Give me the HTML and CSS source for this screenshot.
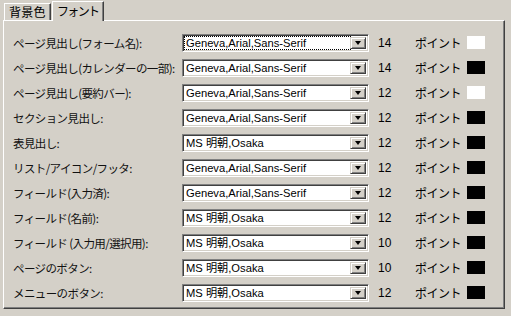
FILE: index.html
```html
<!DOCTYPE html>
<html lang="ja">
<head>
<meta charset="utf-8">
<link rel="stylesheet" href="styles.css">
</head>
<body>
<div class="dialog">
  <div class="tabs">
    <div class="tab">背景色</div>
    <div class="tab active">フォント</div>
  </div>
  <div class="panel">
    <div class="row">
      <div class="label">ページ見出し(フォーム名):</div>
      <div class="select focus"><span class="val"><span class="focusbox">Geneva,Arial,Sans-Serif</span></span><span class="btn"><i></i></span></div>
      <div class="size">14</div><div class="unit">ポイント</div><div class="swatch white"></div>
    </div>
    <div class="row">
      <div class="label">ページ見出し(カレンダーの一部):</div>
      <div class="select"><span class="val">Geneva,Arial,Sans-Serif</span><span class="btn"><i></i></span></div>
      <div class="size">14</div><div class="unit">ポイント</div><div class="swatch black"></div>
    </div>
    <div class="row">
      <div class="label">ページ見出し(要約バー):</div>
      <div class="select"><span class="val">Geneva,Arial,Sans-Serif</span><span class="btn"><i></i></span></div>
      <div class="size">12</div><div class="unit">ポイント</div><div class="swatch white"></div>
    </div>
    <div class="row">
      <div class="label">セクション見出し:</div>
      <div class="select"><span class="val">Geneva,Arial,Sans-Serif</span><span class="btn"><i></i></span></div>
      <div class="size">12</div><div class="unit">ポイント</div><div class="swatch black"></div>
    </div>
    <div class="row">
      <div class="label">表見出し:</div>
      <div class="select"><span class="val">MS 明朝,Osaka</span><span class="btn"><i></i></span></div>
      <div class="size">12</div><div class="unit">ポイント</div><div class="swatch black"></div>
    </div>
    <div class="row">
      <div class="label">リスト/アイコン/フッタ:</div>
      <div class="select"><span class="val">Geneva,Arial,Sans-Serif</span><span class="btn"><i></i></span></div>
      <div class="size">12</div><div class="unit">ポイント</div><div class="swatch black"></div>
    </div>
    <div class="row">
      <div class="label">フィールド(入力済):</div>
      <div class="select"><span class="val">Geneva,Arial,Sans-Serif</span><span class="btn"><i></i></span></div>
      <div class="size">12</div><div class="unit">ポイント</div><div class="swatch black"></div>
    </div>
    <div class="row">
      <div class="label">フィールド(名前):</div>
      <div class="select"><span class="val">MS 明朝,Osaka</span><span class="btn"><i></i></span></div>
      <div class="size">12</div><div class="unit">ポイント</div><div class="swatch black"></div>
    </div>
    <div class="row">
      <div class="label">フィールド (入力用/選択用):</div>
      <div class="select"><span class="val">MS 明朝,Osaka</span><span class="btn"><i></i></span></div>
      <div class="size">10</div><div class="unit">ポイント</div><div class="swatch black"></div>
    </div>
    <div class="row">
      <div class="label">ページのボタン:</div>
      <div class="select"><span class="val">MS 明朝,Osaka</span><span class="btn"><i></i></span></div>
      <div class="size">10</div><div class="unit">ポイント</div><div class="swatch black"></div>
    </div>
    <div class="row">
      <div class="label">メニューのボタン:</div>
      <div class="select"><span class="val">MS 明朝,Osaka</span><span class="btn"><i></i></span></div>
      <div class="size">12</div><div class="unit">ポイント</div><div class="swatch black"></div>
    </div>
  </div>
</div>
</body>
</html>
```
FILE: styles.css
```css
html, body {
  margin: 0;
  padding: 0;
  background: #d4d0c8;
}
body {
  width: 511px;
  height: 316px;
  overflow: hidden;
  font-family: "Noto Sans CJK JP", "Liberation Sans", sans-serif;
  font-size: 12px;
  color: #000;
}
.dialog {
  padding: 2px 6px 0 3px;
}
.tabs {
  display: flex;
  align-items: flex-end;
  height: 18px;
  padding-left: 1px;
  position: relative;
  z-index: 2;
}
.tab {
  height: 16px;
  line-height: 16px;
  padding: 0 4px;
  border-top: 1px solid #fff;
  border-left: 1px solid #fff;
  border-right: 1px solid #404040;
  box-shadow: inset -1px 0 0 #808080;
  font-size: 12px;
  letter-spacing: 0.3px;
}
.tab.active {
  height: 19px;
  margin-bottom: -1px;
  margin-left: 1px;
  background: #d4d0c8;
  padding: 0 4px 0 4px;
  line-height: 17px;
  letter-spacing: -1.6px;
}
.panel {
  border-top: 1px solid #fff;
  border-left: 1px solid #fff;
  border-right: 1px solid #404040;
  border-bottom: 1px solid #404040;
  box-shadow: inset -1px -1px 0 #808080;
  height: 289px;
  padding: 9px 0 0 9px;
  box-sizing: border-box;
}
.row {
  display: flex;
  align-items: center;
  height: 25px;
}
.label {
  width: 169px;
  font-size: 11.5px;
  white-space: nowrap;
  letter-spacing: -0.6px;
  color: #111;
}
.select {
  width: 187px;
  height: 18px;
  box-sizing: border-box;
  display: flex;
  align-items: stretch;
  background: #fff;
  border-top: 1px solid #808080;
  border-left: 1px solid #808080;
  border-right: 1px solid #fff;
  border-bottom: 1px solid #fff;
  box-shadow: inset 1px 1px 0 #404040, inset -1px -1px 0 #d4d0c8;
  padding: 2px;
}
.val {
  flex: 1;
  font-family: "Liberation Sans", "Noto Sans CJK JP", sans-serif;
  font-size: 11.2px;
  line-height: 12px;
  padding-left: 1px;
  display: flex;
  align-items: center;
  white-space: nowrap;
}
.focusbox {
  outline: 1px dotted #000;
  outline-offset: 0;
  flex: 1;
  height: 12px;
  margin-left: -1px;
  padding-left: 1px;
}
.btn {
  width: 16px;
  background: #d4d0c8;
  box-sizing: border-box;
  border-top: 1px solid #d4d0c8;
  border-left: 1px solid #d4d0c8;
  border-right: 1px solid #404040;
  border-bottom: 1px solid #404040;
  box-shadow: inset 1px 1px 0 #fff, inset -1px -1px 0 #808080;
  display: flex;
  align-items: center;
  justify-content: center;
}
.btn i {
  width: 0;
  height: 0;
  border-left: 3.5px solid transparent;
  border-right: 3.5px solid transparent;
  border-top: 4px solid #000;
  margin-top: 1px;
}
.size {
  width: 46px;
  padding-left: 9px;
  box-sizing: border-box;
  font-family: "Liberation Sans", sans-serif;
  font-size: 12px;
}
.unit {
  width: 52px;
  font-size: 12px;
  letter-spacing: -0.5px;
}
.swatch {
  width: 18px;
  height: 13px;
}
.swatch.white { background: #fff; }
.swatch.black { background: #000; }
```
